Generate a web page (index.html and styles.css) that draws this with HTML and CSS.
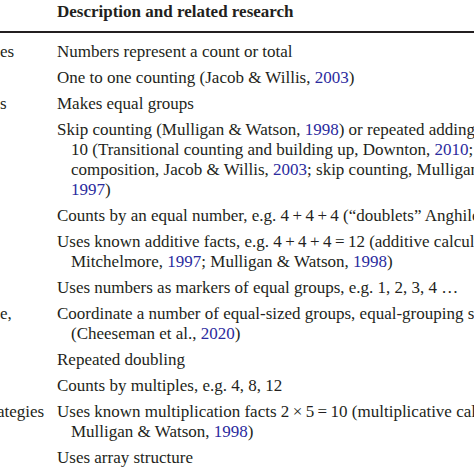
FILE: index.html
```html
<!DOCTYPE html>
<html>
<head>
<meta charset="utf-8">
<link rel="stylesheet" href="styles.css">
</head>
<body>
<div class="table">
  <div class="head">
    <div class="cell cat"></div>
    <div class="cell desc"><b>Description and related research</b></div>
  </div>
  <div class="rule"></div>
  <div class="body">
    <div class="row"><div class="cell cat">es</div><div class="cell desc">Numbers represent a count or total</div></div>
    <div class="row"><div class="cell cat"></div><div class="cell desc">One to one counting (Jacob &amp; Willis, <a>2003</a>)</div></div>
    <div class="row"><div class="cell cat">s</div><div class="cell desc">Makes equal groups</div></div>
    <div class="row"><div class="cell cat"></div><div class="cell desc">Skip counting (Mulligan &amp; Watson, <a>1998</a>) or repeated adding of 2, 5 and<br>10 (Transitional counting and building up, Downton, <a>2010</a>; multiplicative<br>composition, Jacob &amp; Willis, <a>2003</a>; skip counting, Mulligan &amp; Mitchelmore,<br><a>1997</a>)</div></div>
    <div class="row"><div class="cell cat"></div><div class="cell desc">Counts by an equal number, e.g. 4&thinsp;+&thinsp;4&thinsp;+&thinsp;4 (“doublets” Anghileri, <a>1989</a>)</div></div>
    <div class="row"><div class="cell cat"></div><div class="cell desc">Uses known additive facts, e.g. 4&thinsp;+&thinsp;4&thinsp;+&thinsp;4&thinsp;=&thinsp;12 (additive calculation, Mulligan &amp;<br>Mitchelmore, <a>1997</a>; Mulligan &amp; Watson, <a>1998</a>)</div></div>
    <div class="row"><div class="cell cat"></div><div class="cell desc">Uses numbers as markers of equal groups, e.g. 1, 2, 3, 4 …</div></div>
    <div class="row"><div class="cell cat">e,</div><div class="cell desc">Coordinate a number of equal-sized groups, equal-grouping structure<br>(Cheeseman et al., <a>2020</a>)</div></div>
    <div class="row"><div class="cell cat"></div><div class="cell desc">Repeated doubling</div></div>
    <div class="row"><div class="cell cat"></div><div class="cell desc">Counts by multiples, e.g. 4, 8, 12</div></div>
    <div class="row"><div class="cell cat"><span class="cut">ategies</span></div><div class="cell desc">Uses known multiplication facts 2&thinsp;×&thinsp;5&thinsp;=&thinsp;10 (multiplicative calculation, Mulligan &amp; Mitchelmore, <a>1997</a>;<br>Mulligan &amp; Watson, <a>1998</a>)</div></div>
    <div class="row"><div class="cell cat"></div><div class="cell desc">Uses array structure</div></div>
  </div>
</div>
</body>
</html>
```
FILE: styles.css
```css
html, body {
  margin: 0;
  padding: 0;
  background: #ffffff;
  overflow: hidden;
  width: 474px;
  height: 474px;
}
body {
  font-family: "Liberation Serif", "Times New Roman", serif;
  font-size: 17px;
  line-height: 20px;
  color: #231f20;
}
.table {
  display: flex;
  flex-direction: column;
}
.head,
.row {
  display: grid;
  grid-template-columns: 57px max-content;
}
.head {
  padding: 2px 0 9px;
}
.head b {
  font-weight: bold;
}
.rule {
  height: 2px;
  width: 474px;
  background: #231f20;
}
.body {
  padding-top: 6px;
  display: flex;
  flex-direction: column;
}
.row {
  padding: 3px 0;
}
.cell {
  white-space: nowrap;
}
.desc {
  padding-left: 14px;
  text-indent: -14px;
}
.cat {
  overflow: hidden;
}
.cut {
  display: inline-block;
  margin-left: -3px;
}
a {
  color: #2b2b9e;
  text-decoration: none;
}
```
